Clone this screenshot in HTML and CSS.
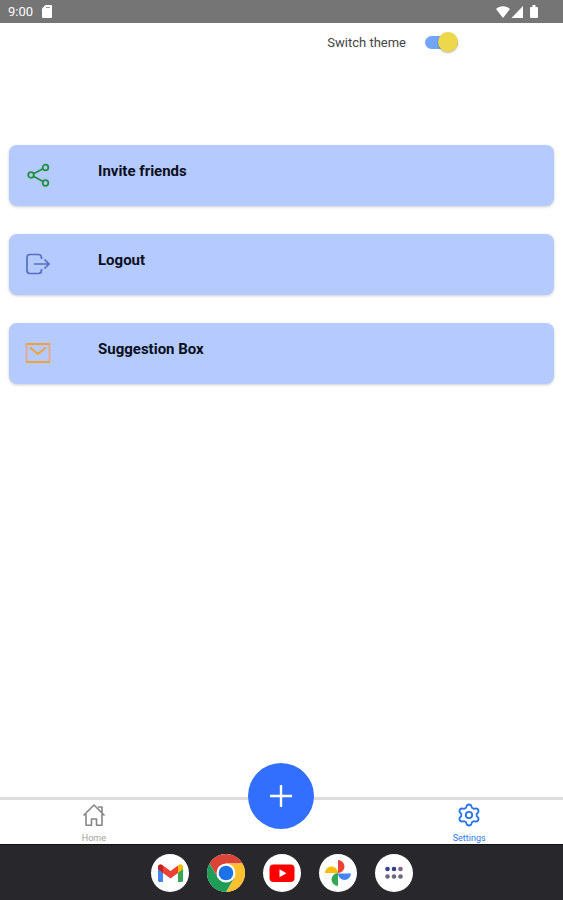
FILE: index.html
```html
<!DOCTYPE html>
<html lang="en">
<head>
<meta charset="utf-8">
<meta name="viewport" content="width=device-width, initial-scale=1">
<title>Settings</title>
<link rel="stylesheet" href="styles.css">
</head>
<body>
<header class="status">
  <span>9:00</span>
  <svg class="sd" width="10" height="13" viewBox="0 0 10 13"><path fill="#fff" d="M3.500 0H9a1 1 0 0 1 1 1v11a1 1 0 0 1-1 1H1a1 1 0 0 1-1-1V3.500z"/><path stroke="#999" d="M4 2.500h4"/></svg>
  <svg class="signals" width="42" height="14" viewBox="0 0 42 14" fill="#fff"><path d="M0 4C4 .2 10 .2 14 4L7 13z"/><path d="M27 1v12H15.500z"/><path d="M35 2h1.500V0h3v2H41a1 1 0 0 1 1 1v9a1 1 0 0 1-1 1h-6a1 1 0 0 1-1-1V3a1 1 0 0 1 1-1z"/></svg>
</header>
<main class="content">
  <div class="theme">
    <label for="theme">Switch theme</label>
    <input class="switch" id="theme" type="checkbox" role="switch" checked>
  </div>
  <div class="cards">
    <button class="card" type="button">
      <svg width="26" height="26" viewBox="0 0 26 26" fill="none" stroke="#218f43" stroke-width="1.800"><circle cx="6" cy="13" r="2.800"/><circle cx="20.500" cy="5.500" r="2.800"/><circle cx="20.500" cy="21" r="2.800"/><path d="M8.500 11.700l9.500-4.900M8.500 14.300l9.500 5.200"/></svg>
      <span>Invite friends</span>
    </button>
    <button class="card" type="button">
      <svg width="26" height="26" viewBox="0 0 26 26" fill="none" stroke="#5570c0" stroke-width="1.700"><path d="M16.500 8V6.500a3 3 0 0 0-3-3H5a3 3 0 0 0-3 3v13a3 3 0 0 0 3 3h8.500a3 3 0 0 0 3-3V18M9 13h14M19.500 8.500L24 13l-4.500 4.500"/></svg>
      <span>Logout</span>
    </button>
    <button class="card" type="button">
      <svg width="26" height="26" viewBox="0 0 26 26" fill="none"><path stroke="#e6aa91" stroke-width="2" d="M1.500 4v18M24.500 4v18"/><path stroke="#f0a13b" stroke-width="2" d="M1 4h24M1 22h24M5 7.500l8 6.500 8-6.500"/></svg>
      <span>Suggestion Box</span>
    </button>
  </div>
</main>
<nav class="tabs">
  <a class="tab" href="#home">
    <svg width="24" height="24" viewBox="0 0 24 24" fill="none" stroke="#858585" stroke-width="1.600" stroke-linejoin="round"><path d="M1.500 12.500L12 2l10.500 10.500M4 11v11.300h5.500V16h5v6.300H20V11M16 4h4v5.500"/></svg>
    <span>Home</span>
  </a>
  <button class="add" type="button" aria-label="Add"><svg width="24" height="24" viewBox="0 0 24 24"><path stroke="#fff" stroke-width="2.400" d="M12 1v22M1 12h22"/></svg></button>
  <a class="tab active" href="#settings">
    <svg width="24" height="24" viewBox="0 0 24 24" fill="none" stroke="#2874e8" stroke-width="1.800" stroke-linejoin="round"><circle cx="12" cy="12" r="3.200"/><path d="M9.800 2.500Q12 .5 14.200 2.500l.7 2.200 1.900 1.100 2.400-.5q2.800.8 2.200 3.800l-1.700 1.700v2.400l1.700 1.700q.6 3-2.200 3.800l-2.400-.5-1.900 1.100-.7 2.200q-2.200 2-4.400 0l-.7-2.200-1.900-1.100-2.400.5Q2 17.900 2.600 14.900l1.700-1.700v-2.400L2.600 9.100Q2 6.100 4.800 5.300l2.400.5 1.900-1.100z"/></svg>
    <span>Settings</span>
  </a>
</nav>
<footer class="dock">
  <button class="app" type="button" aria-label="Gmail"><svg viewBox="0 0 38 38"><path fill="#4285f4" d="M7 14l5 3.500V28H8.500A1.500 1.500 0 0 1 7 26.500z"/><path fill="#34a853" d="M27 17.500l5-3.500v12.500a1.500 1.500 0 0 1-1.500 1.500H27z"/><path fill="#fbbc04" d="M27 11.500l1-.7c1.700-1.300 4 0 4 2V15l-5 4z"/><path fill="#c5221f" d="M12 11.500l-1-.7c-1.700-1.300-4 0-4 2V15l5 4z"/><path fill="#ea4335" d="M12 11.500l7.500 5.600 7.500-5.600V19l-7.500 5.600L12 19z"/></svg></button>
  <button class="app" type="button" aria-label="Chrome"><svg viewBox="0 0 38 38"><path fill="#db4437" d="M2.550 9.500A19 19 0 0 1 35.450 9.500L19 9.500v9.500l-8 5z"/><path fill="#fdc02f" d="M35.450 9.500A19 19 0 0 1 19 38l8.200-14.200L19 9.500z"/><path fill="#1e9d58" d="M2.550 9.500A19 19 0 0 0 19 38l8.200-14.200H10.800z"/><circle cx="19" cy="19" r="9.500" fill="#fff"/><circle cx="19" cy="19" r="7.300" fill="#1a73e8"/></svg></button>
  <button class="app" type="button" aria-label="YouTube"><svg viewBox="0 0 38 38"><rect x="6.500" y="10.500" width="25" height="17.500" rx="4" fill="#f00"/><path fill="#fff" d="M16.500 15.300v8l7-4z"/></svg></button>
  <button class="app" type="button" aria-label="Photos"><svg viewBox="0 0 38 38"><path fill="#ea4335" d="M19 6a6.500 6.500 0 0 1 0 13z"/><path fill="#4285f4" d="M32 19.500a6.500 6.500 0 0 1-13 0z"/><path fill="#34a853" d="M19 32a6.500 6.500 0 0 1 0-13z"/><path fill="#fbbc04" d="M6 19a6.500 6.500 0 0 1 13 0z"/></svg></button>
  <button class="app" type="button" aria-label="All apps"><svg viewBox="0 0 38 38"><g fill="#34408d"><circle cx="12.500" cy="15" r="2.300"/><circle cx="19" cy="15" r="2.300"/></g><circle cx="25.500" cy="15" r="2.300" fill="#84617f"/><g fill="#686882"><circle cx="12.500" cy="22.500" r="2.300"/><circle cx="19" cy="22.500" r="2.300"/><circle cx="25.500" cy="22.500" r="2.300"/></g></svg></button>
</footer>
</body>
</html>
```

FILE: styles.css
```css
* {
  box-sizing: border-box;
}

body {
  display: flex;
  flex-direction: column;
  min-height: 100vh;
  margin: 0;
  background: #fff;
  color: #111;
  font-family: Roboto, "Liberation Sans", sans-serif;
}

button {
  padding: 0;
  border: 0;
  font-family: inherit;
}

svg {
  display: block;
}

.status {
  display: flex;
  align-items: center;
  gap: 9px;
  height: 23px;
  padding: 0 25px 0 8px;
  background: #757575;
  color: #fff;
  font-size: 13px;
}

.signals {
  margin-left: auto;
}

.content {
  flex: 1;
}

.theme {
  display: flex;
  align-items: center;
  justify-content: flex-end;
  gap: 19px;
  height: 38px;
  margin-right: 105px;
  color: #444;
  font-size: 13px;
}

.switch {
  display: flex;
  align-items: center;
  justify-content: flex-end;
  appearance: none;
  width: 33px;
  height: 13px;
  margin: 0;
  border-radius: 7px;
  background: #73a5fa;
}

.switch::before {
  content: "";
  flex: none;
  width: 20px;
  height: 20px;
  border-radius: 50%;
  background: #edd74b;
  box-shadow: 0 1px 2px rgb(0 0 0 / 30%);
}

.switch:not(:checked) {
  justify-content: flex-start;
}

.cards {
  display: grid;
  gap: 28px;
  padding: 84px 9px 28px;
}

.card {
  display: flex;
  align-items: flex-start;
  gap: 47px;
  height: 61px;
  padding: 17px 16px;
  border-radius: 8px;
  background: #b5caff;
  box-shadow: 0 1px 3px rgb(0 0 0 / 20%);
  color: #0b0f1c;
  font-size: 15px;
  font-weight: 700;
  line-height: 18px;
  text-align: left;
}

.tabs {
  display: grid;
  grid-template-columns: repeat(3, 1fr);
  justify-items: center;
  height: 47px;
  border-top: 3px solid #dcdcdc;
}

.tab {
  display: flex;
  flex-direction: column;
  align-items: center;
  gap: 4px;
  padding-top: 3px;
  color: #a0a0a0;
  font-size: 9px;
  line-height: 14px;
  text-decoration: none;
}

.active {
  color: #2f78ee;
}

.add {
  display: grid;
  place-items: center;
  width: 66px;
  height: 66px;
  margin-top: -37px;
  border-radius: 50%;
  background: #326fff;
}

.dock {
  display: flex;
  align-items: center;
  justify-content: center;
  gap: 18px;
  height: 56px;
  border-top: 1px solid #111;
  background: #28282c;
}

.app {
  width: 38px;
  height: 38px;
  border-radius: 50%;
  background: #fff;
}
```
